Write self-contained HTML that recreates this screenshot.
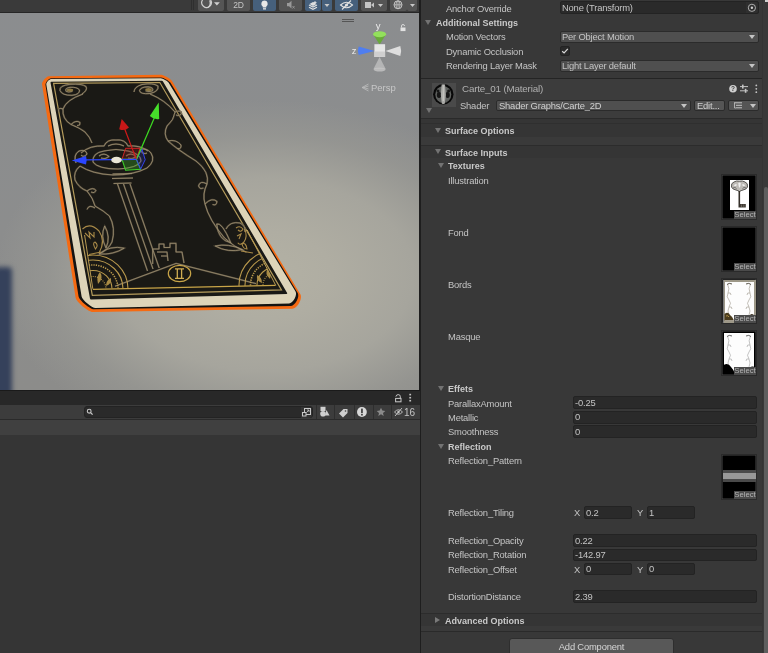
<!DOCTYPE html>
<html><head><meta charset="utf-8">
<style>
html,body{margin:0;padding:0;width:768px;height:653px;overflow:hidden;background:#383838;}
*{box-sizing:border-box;}
.a{position:absolute;}
svg.a{will-change:transform;}
.t{will-change:transform;position:absolute;font-family:"Liberation Sans",sans-serif;font-size:9.4px;letter-spacing:-0.18px;line-height:12px;color:#c4c4c4;white-space:nowrap;}
.b{font-weight:bold;color:#c9c9c9;font-size:9px;letter-spacing:0;}
.fld{position:absolute;background:#2a2a2a;border:1px solid #232323;border-radius:2px;}
.dd{position:absolute;background:#4f4f4f;border:1px solid #2b2b2b;border-radius:2px;}
.tri{position:absolute;width:0;height:0;border-left:3.3px solid transparent;border-right:3.3px solid transparent;border-top:5.4px solid #737373;}
.trir{position:absolute;width:0;height:0;border-top:3px solid transparent;border-bottom:3px solid transparent;border-left:5px solid #7a7a7a;}
.ddarrow{position:absolute;width:0;height:0;border-left:3px solid transparent;border-right:3px solid transparent;border-top:4px solid #c4c4c4;}
.tb{position:absolute;top:0;height:10.7px;background:#555555;border-radius:0 0 2px 2px;}
.tbon{background:#46607c;}
.slot{position:absolute;width:36px;height:46px;background:#000;border:1px solid #2a2a2a;box-shadow:0 0 0 0.5px #474747 inset;}
.sel{will-change:transform;position:absolute;width:22px;height:8px;background:#4b4b4b;font-family:"Liberation Sans",sans-serif;font-size:7.7px;line-height:8.8px;color:#b4b4b4;text-align:center;overflow:hidden;}
</style></head>
<body>
<!-- ================= SCENE VIEW ================= -->
<div class="a" style="left:0;top:0;width:419px;height:390px;overflow:hidden;background:radial-gradient(ellipse 270px 175px at 265px 275px,#b3b1a4 0%,#afada2 25%,#a6a59d 55%,rgba(152,152,147,0.7) 80%,rgba(140,141,140,0) 100%),linear-gradient(180deg,#8b8d8f 0%,#8c8d8d 60%,#8c8c8a 100%);">
  <!-- CARD -->
<svg class="a" style="left:0;top:0;" width="420" height="390" viewBox="0 0 420 390">
 <defs>
  <filter id="bl" x="-5%" y="-5%" width="110%" height="110%" color-interpolation-filters="sRGB"><feGaussianBlur stdDeviation="0.3"/></filter>
  <clipPath id="fanclip"><path d="M79.1 200 L231.7 200 L275.8 285.5 L92.8 288.8 Z"/></clipPath>
 </defs>
 <g filter="url(#bl)">
 <path d="M75.59 297.52 L42.02 84.24 C41.65 81.87 46.38 76.27 48.78 76.24 L161.22 74.86 C163.32 74.84 170.74 78.98 171.83 80.78 L300.32 294.35 C302.88 298.59 297.28 308.68 292.33 308.76 L92.92 312.08 C88.42 312.16 76.29 301.96 75.59 297.52 Z" fill="#f56a12"/>
 <path d="M78.52 296.15 L45.43 84.84 C45.13 82.92 48.98 78.39 50.93 78.37 L161.24 77.51 C163.04 77.50 169.41 81.06 170.34 82.60 L297.73 292.91 C300.06 296.76 295.00 305.92 290.50 305.99 L94.11 309.26 C90.06 309.33 79.15 300.15 78.52 296.15 Z" fill="#141311"/>
 <path d="M81.60 296.38 L46.32 84.42 C46.05 82.79 49.27 78.97 50.92 78.96 L160.92 78.23 C162.42 78.22 167.74 81.19 168.51 82.47 L295.54 291.57 C297.64 295.03 293.10 303.33 289.05 303.42 L95.57 307.94 C91.97 308.02 82.19 299.93 81.60 296.38 Z" fill="#ddd4b9"/>
 <path d="M89.99 298.58 L50.53 82.66 C50.44 82.17 50.85 81.67 51.35 81.67 L161.62 80.81 C162.12 80.81 162.87 81.23 163.13 81.66 L287.15 293.04 C287.41 293.48 287.16 293.92 286.66 293.94 L91.17 299.54 C90.67 299.55 90.08 299.08 89.99 298.58 Z" fill="#1a1915"/>
 <path d="M92.34 295.30 L53.61 83.35 L159.81 82.52 L281.47 289.88 Z" fill="none" stroke="#b59c5c" stroke-width="1.2"/>
 <path d="M92.8 289.4 L275.5 285.3" stroke="#c9a548" stroke-width="1.3" fill="none"/>
 <!-- ornaments grey-gold -->
 <g id="ornp" fill="none">
  <!-- TL spiral -->
  <path d="M82 94 Q88 90 86 86.5 Q82 83.5 70 84.3 Q59 85.5 60 90.5 Q62 95.5 72 95.3 Q80 94.5 79.5 90 Q77 86.8 70 87.3 Q64.5 88.3 66 91.2 Q68 92.8 72.5 91.2"/>
  <!-- TR spiral -->
  <path d="M134 92 Q134 87 142 84.5 Q153 82.5 158 86 Q159 91.5 150 93.5 Q140 94.5 139.5 90.5 Q141 86.8 148 86.8 Q154 87.5 152.5 90.8 Q149 92.5 145.5 90.8"/>
  <!-- left vine -->
  <path d="M83 94 Q66 100 63 109 Q62 119 71 124.5 Q80 128 85 132 Q90 137 92 143"/>
  <path d="M71 124.5 Q76 119.5 80 122.5 Q80.5 126 77 125.5"/>
  <path d="M63 109 Q58 107 58.5 111.5"/>
  <!-- right vine -->
  <path d="M150 94 Q165 100 175 112 Q174 120 167 126 Q163 134 168 141 Q178 150 196 161 Q210 172 207 184 Q202 194 205 204 Q209 220 224.5 238 Q234 247 246.4 252.2"/>
  <path d="M175 112 Q181 109.5 181.5 113.5 Q179.5 117 176 115"/>
  <path d="M168 141 Q176 139 181 145 Q181.5 149.5 177.5 148.5"/>
  <path d="M207 184 Q200 180 198.5 186 Q200 190 203.5 188"/>
  <path d="M205 204 Q212 197 217 201.5 Q216.5 206 212.5 204.5"/>
  <!-- lower left vine -->
  <path d="M80 166 Q73 172 75 180 Q79 188 87 191 Q93 198 95 206 Q104 211 109.4 216 Q116 228 112 242 Q108 250 99 254"/>
  <path d="M87 191 Q93 186.5 96 190.5 Q94.5 194 91 192"/>
  <path d="M95 208 Q89 204 87 209.5"/>
  <!-- key head -->
  <path d="M76 163 Q73 155 79 151 Q86 149 87 154 Q84 158 81 155"/>
  <path d="M80 166 Q92 174 113 175 Q134 175 147 168 Q156 161 151 153 Q146 147 140 150 Q143 155 147 153"/>
  <path d="M81 153 Q90 145 104 146 Q107 139 116 140 Q125 139 128 146 Q140 145 148 151"/>
  <path d="M93 162 Q92 153 104 151 Q116 148 128 151 Q141 154 141 161 Q138 168 118 169 Q98 169 93 162Z"/>
  <path d="M108 146 Q116 142 124 146 M99 156 Q104 152 109 156.5 Q105 160 101 158 M126 156 Q131 152 136 156.5 Q132 160 128 158"/>
  <!-- key collar & shaft -->
  <path d="M112.5 174 L132 173.5 M112 178.5 L133 178 M113.5 183.5 L131.5 183"/>
  <path d="M117.5 184 L147.5 271 M130 184 L159.2 268 M123.5 184 L153 269"/>
  <!-- key bit castle -->
  <path d="M152.7 264 L152.7 249 L159 249 L159 244 L164 244 L164 247.5 L170 247.5 L170 243.3 L176 243.3 L176 252 L182 252 L184 263"/>
  <path d="M157 252 L167 252 L168 261 M161 256 L167 256"/>
  <!-- leaves left -->
  <path d="M104.7 226 Q100 236 106 248 Q111 237 104.7 226Z"/>
  <path d="M99 254 Q110 245 124.2 248.2 Q113 255 99 254Z"/>
  <!-- leaves right -->
  <path d="M216.7 224 Q222 222 230.8 242.8 Q218 240 216.7 224Z"/>
  <path d="M215.2 246 Q228 243 242.5 249.5 Q228 253 215.2 246Z"/>
  <path d="M226 229 Q230 221 240 223 Q246 226 245 232"/>
  <!-- roof -->
  <path d="M115 286.2 L176.1 263.4 L256 283.6"/>
 </g>
 <use href="#ornp" stroke="#4f4737" stroke-width="1.7"/>
 <use href="#ornp" stroke="#a39475" stroke-width="0.75"/>
 <ellipse cx="70" cy="90" rx="3.2" ry="1.5" fill="#8a7640"/>
 <ellipse cx="148.5" cy="89.5" rx="3.2" ry="1.5" fill="#8a7640"/>
 <g fill="none" stroke="#c29f4a" stroke-width="1.1">
  <!-- curled gold leaves -->
  <g stroke="#a98a48" stroke-width="1.1" fill="none">
   <path d="M82.5 229 Q90 222 99 231 Q106 241 99 253"/>
   <path d="M85 233 L90 238 L89 232 L94 237 L94 232"/>
   <path d="M95.5 249 Q92 243 95 242 Q99 245 95.5 249Z"/>
   <path d="M89 254.5 L101 252"/>
   <path d="M244.5 229 Q248 236 244 242 Q240 246 237.8 242.8"/>
   <path d="M236 228 Q240 225 243 229 Q241 233 238 230 M237 236 L241 234 L239 239"/>
   <path d="M242 244 Q246 242 247 249 Q243 249 242 244Z"/>
   <path d="M241 251 L253 253"/>
  </g>
  <!-- fans -->
  <g clip-path="url(#fanclip)">
   <g stroke="#b8984c">
    <ellipse cx="93" cy="289" rx="35" ry="34"/>
    <ellipse cx="93" cy="289" rx="30" ry="29"/>
    <ellipse cx="93" cy="289" rx="25" ry="24" stroke-dasharray="1.3 1.1" stroke-width="1.6"/>
    <ellipse cx="93" cy="289" rx="19" ry="18.5"/>
    <ellipse cx="93" cy="289" rx="13" ry="12.5" stroke-dasharray="1 1.2"/>
    <ellipse cx="276" cy="285" rx="37" ry="35"/>
    <ellipse cx="276" cy="285" rx="31" ry="29.5"/>
    <ellipse cx="276" cy="285" rx="25.5" ry="24" stroke-dasharray="1.3 1.1" stroke-width="1.6"/>
    <ellipse cx="276" cy="285" rx="19" ry="18"/>
    <ellipse cx="276" cy="285" rx="13" ry="12.5" stroke-dasharray="1 1.2"/>
   </g>
   <path d="M98 284 Q96 276 100 272 Q104 278 98 284Z M106 286 Q106 280 111 278 Q112 284 106 286Z M270 279 Q272 272 268 268 Q264 274 270 279Z M262 283 Q262 277 257 275 Q256 281 262 283Z" fill="#a88a45" stroke="none"/>
  </g>
  <path d="M84.6 235 L92.8 288.8 M247.2 230 L275.8 285.5" stroke="#b89a52" stroke-width="1"/>
  <ellipse cx="179.5" cy="273.5" rx="11.2" ry="8.2" stroke="#c9a548" stroke-width="1.2"/>
  <path d="M177.3 268.8 V278.3 M181.6 268.8 V278.3 M175 268.8 H184 M175 278.3 H184" stroke="#d0ad52" stroke-width="1.3"/>
 </g>
 </g>
 <!-- transform gizmo -->
 <g>
  <path d="M122 159.4 L125.6 148.3 L140 148.3 L136.4 159.4Z" fill="rgba(150,30,30,0.28)" stroke="#d02424" stroke-width="1"/>
  <path d="M122 159.4 L136.4 159.4 L140.6 169.2 L125.6 170.2Z" fill="rgba(60,170,40,0.35)" stroke="#3fd02a" stroke-width="1.1"/>
  <path d="M136.4 159.4 L141.9 149 L145.2 159.7 L140.6 169.2Z" fill="rgba(40,50,200,0.22)" stroke="#3344ee" stroke-width="1"/>
  <path d="M136.4 159.4 L154.5 117.5" stroke="#3ddd22" stroke-width="1.2"/>
  <path d="M158.75 102.5 L149.8 116 Q154 120 159.2 119 Z" fill="#46e02a"/>
  <path d="M136.4 159.4 L124.5 128.5" stroke="#d31a1a" stroke-width="1.2"/>
  <path d="M121.7 118.9 L119.2 129.2 Q124.5 131.5 129 127.5 Z" fill="#c81818"/>
  <path d="M136.4 159.4 L85.8 159.9" stroke="#2a44ff" stroke-width="1.4"/>
  <path d="M71.7 160.6 L86 156 Q87.5 160.3 86 164.5 Z" fill="#2b46ff"/>
  <ellipse cx="116.5" cy="160" rx="5.3" ry="3.2" fill="#ebe6d6"/>
 </g>
</svg>

  <!-- blue object at left -->
  <div class="a" style="left:-6px;top:267px;width:17.5px;height:130px;background:#35415b;filter:blur(2.4px);border-radius:4px;"></div>
</div>
<!-- top toolbar -->
<div class="a" style="left:0;top:0;width:420px;height:12.5px;background:#3a3a3a;border-bottom:1.5px solid #262626;"></div>

<!-- toolbar buttons -->
<div class="a" style="left:191px;top:0;width:1px;height:10px;background:#2f2f2f;"></div>
<div class="a" style="left:193px;top:0;width:1px;height:10px;background:#2f2f2f;"></div>
<div class="tb" style="left:198px;width:26px;"></div>
<svg class="a" style="left:198px;top:0px;" width="26" height="11" viewBox="0 0 26 11"><path d="M4.5 0 A4.8 4.8 0 1 0 12.6 0" fill="none" stroke="#d0d0d0" stroke-width="1.2"/><path d="M11.2 0.5 Q12.8 5.5 8.5 8.2 Q12 7.8 13 4 Q13.2 1.5 12.4 0Z" fill="#d0d0d0"/><path d="M16 2.3 L21.8 2.3 L18.9 5.5 Z" fill="#d0d0d0"/></svg>
<div class="tb" style="left:227px;width:23px;"></div>
<div class="t" style="left:227px;top:-1px;width:23px;text-align:center;color:#c4c4c4;font-size:8.5px;">2D</div>
<div class="tb tbon" style="left:253px;width:23px;"></div>
<svg class="a" style="left:253px;top:0;" width="23" height="11" viewBox="0 0 23 11"><path d="M11.5 0.5 A3.3 3.3 0 0 1 13.3 6.5 V7.5 H9.7 V6.5 A3.3 3.3 0 0 1 11.5 0.5Z" fill="#e8e8e8"/><rect x="10" y="8.2" width="3" height="1.3" fill="#e8e8e8"/></svg>
<div class="tb" style="left:279px;width:23px;"></div>
<svg class="a" style="left:279px;top:0;" width="23" height="11" viewBox="0 0 23 11"><path d="M8 3 H10 L12.5 0.8 V8.5 L10 6.3 H8 Z" fill="#9a9a9a"/><path d="M13.5 6 L15.5 8.5 M15.5 6 L13.5 8.5" stroke="#9a9a9a" stroke-width="0.8"/></svg>
<div class="tb tbon" style="left:305px;width:16px;"></div>
<div class="tb tbon" style="left:322px;width:10px;"></div>
<svg class="a" style="left:305px;top:0;" width="27" height="11" viewBox="0 0 27 11"><path d="M4 5 L8 7 L12 5 M4 7.3 L8 9.3 L12 7.3" stroke="#e0e0e0" stroke-width="1.2" fill="none"/><path d="M4.5 4 L8 2 L11.5 4 L8 6Z" fill="#e0e0e0"/><path d="M10 1 V4 M8.5 2.5 H11.5" stroke="#e0e0e0" stroke-width="0.9"/><path d="M19.5 4 L24.5 4 L22 7 Z" fill="#c8c8c8"/></svg>
<div class="tb tbon" style="left:335px;width:23px;"></div>
<svg class="a" style="left:335px;top:0;" width="23" height="11" viewBox="0 0 23 11"><path d="M5.5 5 Q11.5 -0.5 17.5 5 Q11.5 10.5 5.5 5Z" fill="none" stroke="#e0e0e0" stroke-width="1.1"/><circle cx="11.5" cy="5" r="1.6" fill="#e0e0e0"/><path d="M7 9.5 L16 0.5" stroke="#e0e0e0" stroke-width="1.1"/></svg>
<div class="tb" style="left:361px;width:26px;"></div>
<svg class="a" style="left:361px;top:0;" width="26" height="11" viewBox="0 0 26 11"><rect x="4" y="2" width="6" height="6" fill="#c4c4c4"/><path d="M10 5 L13 2.5 V7.5Z" fill="#c4c4c4"/><path d="M17 4 L22 4 L19.5 7 Z" fill="#c8c8c8"/></svg>
<div class="tb" style="left:389.5px;width:17px;"></div>
<div class="tb" style="left:407px;width:10px;"></div>
<svg class="a" style="left:389.5px;top:0;" width="28" height="11" viewBox="0 0 28 11"><circle cx="8" cy="4.8" r="4" fill="none" stroke="#c8c8c8" stroke-width="1"/><path d="M4 4.8 H12 M8 0.8 V8.8" stroke="#c8c8c8" stroke-width="0.8"/><ellipse cx="8" cy="4.8" rx="2" ry="4" fill="none" stroke="#c8c8c8" stroke-width="0.8"/><path d="M20 4 L25 4 L22.5 7 Z" fill="#c8c8c8"/></svg>

<!-- scene gizmo top-right -->
<div class="a" style="left:342px;top:19px;width:12px;height:1px;background:#555;"></div>
<div class="a" style="left:342px;top:21px;width:12px;height:1px;background:#555;"></div>
<svg class="a" style="left:340px;top:15px;" width="80" height="80" viewBox="340 15 80 80">
 <text x="378.2" y="28.5" font-family="Liberation Sans" font-size="9.5" fill="#ececec" text-anchor="middle">y</text>
 <path d="M373.2 34.5 L379.6 44.5 L386 34.5 Z" fill="#68a83a"/>
 <ellipse cx="379.6" cy="34.2" rx="6.5" ry="3" fill="#93e05c"/>
 <path d="M374 57 L379.6 46 L385.2 57 Z" fill="#c9c9c9" opacity="0.6"/>
 <path d="M373.5 69 L379.6 57 L385.7 69 Z" fill="#c6c6c6" opacity="0.7"/>
 <ellipse cx="379.6" cy="69.5" rx="6" ry="2" fill="#c6c6c6" opacity="0.8"/>
 <path d="M358.7 46.5 L374.5 51 L358.7 55 Q357 51 358.7 46.5Z" fill="#4f7ef0"/>
 <path d="M400.3 46 L385.5 51 L400.3 56 Q402 51 400.3 46Z" fill="#dedede"/>
 <rect x="374.4" y="44.2" width="10.7" height="12.7" fill="#e6e6e6"/>
 <rect x="374.4" y="51.5" width="10.7" height="5.4" fill="#cfcfcf"/>
 <text x="354.1" y="54.4" font-family="Liberation Sans" font-size="9.5" fill="#ececec" text-anchor="middle">z</text>
 <rect x="400.5" y="27.5" width="5" height="3.6" fill="#e2e2e2"/>
 <path d="M401.5 27.5 V26 A1.5 1.5 0 0 1 404.5 26" fill="none" stroke="#e2e2e2" stroke-width="0.9"/>
 <path d="M368.5 84 L362 87.5 L368.5 91 M368.5 86 L363.5 87.5 L368.5 89" fill="none" stroke="#d0d0d0" stroke-width="0.7" opacity="0.85"/>
 
 <text x="371" y="91" font-family="Liberation Sans" font-size="9.5" fill="#d2d2d2" opacity="0.85">Persp</text>
</svg>

<!-- splitter -->
<div class="a" style="left:419px;top:0;width:2px;height:653px;background:#1e1e1e;"></div>

<!-- ================= BOTTOM PANEL ================= -->
<div class="a" style="left:0;top:389.6px;width:420px;height:1.4px;background:#1a1a1a;"></div>
<div class="a" style="left:0;top:391px;width:420px;height:14px;background:#282828;"></div>
<div class="a" style="left:0;top:405px;width:420px;height:14px;background:#3c3c3c;"></div>
<div class="a" style="left:0;top:419px;width:420px;height:1px;background:#2a2a2a;"></div>
<div class="a" style="left:0;top:420px;width:420px;height:15px;background:#404040;"></div>
<div class="a" style="left:0;top:435px;width:420px;height:218px;background:#353535;"></div>
<!-- bottom panel icons -->
<svg class="a" style="left:393px;top:392px;" width="24" height="12" viewBox="0 0 24 12"><rect x="2.6" y="6.4" width="5.4" height="3.4" fill="none" stroke="#c8c8c8" stroke-width="1"/><path d="M2.9 4.6 Q3.2 2.6 5.2 2.6 Q7.2 2.6 7.3 4.4 V6.4" fill="none" stroke="#c8c8c8" stroke-width="1"/><rect x="16.3" y="1.8" width="1.8" height="1.6" fill="#c0c0c0"/><rect x="16.3" y="4.9" width="1.8" height="1.6" fill="#c0c0c0"/><rect x="16.3" y="7.9" width="1.8" height="1.6" fill="#c0c0c0"/></svg>
<div class="a" style="left:83.5px;top:406px;width:229px;height:12px;background:#2a2a2a;border:1px solid #232323;border-radius:3px;"></div>
<svg class="a" style="left:86px;top:408px;" width="8" height="8" viewBox="0 0 8 8"><circle cx="3.2" cy="3.2" r="1.9" fill="none" stroke="#c8c8c8" stroke-width="1.1"/><path d="M4.6 4.6 L6.6 6.6" stroke="#c8c8c8" stroke-width="1.3"/></svg>
<div class="a" style="left:300.5px;top:406.5px;width:11.5px;height:11px;background:#333;border-radius:0 3px 3px 0;"></div>
<svg class="a" style="left:301px;top:406.5px;" width="11" height="11" viewBox="0 0 11 11"><rect x="3.5" y="1.5" width="6" height="6" fill="none" stroke="#c8c8c8" stroke-width="1"/><rect x="1.5" y="5.5" width="3.5" height="3.5" fill="#333" stroke="#c8c8c8" stroke-width="1"/><path d="M5.5 5.5 L8 3 M6 3 H8 V5" stroke="#c8c8c8" stroke-width="0.8" fill="none"/></svg>
<div class="a" style="left:315.5px;top:405px;width:1px;height:14px;background:#2e2e2e;"></div>
<div class="a" style="left:334.3px;top:405px;width:1px;height:14px;background:#2e2e2e;"></div>
<div class="a" style="left:353.5px;top:405px;width:1px;height:14px;background:#2e2e2e;"></div>
<div class="a" style="left:372.6px;top:405px;width:1px;height:14px;background:#2e2e2e;"></div>
<div class="a" style="left:390.7px;top:405px;width:1px;height:14px;background:#2e2e2e;"></div>
<svg class="a" style="left:316px;top:405px;" width="104" height="14" viewBox="316 405 104 14">
 <rect x="320.5" y="406.8" width="5" height="4.2" fill="#cfcfcf"/>
 <circle cx="323" cy="413.7" r="2.8" fill="#cfcfcf"/>
 <path d="M326.5 410 L329.5 415.5 L324.8 415.5Z" fill="#cfcfcf"/>
 <path d="M339 413.5 L343.5 409 H347.5 V413 L343 417.5 Z" fill="#cfcfcf"/>
 <circle cx="345.5" cy="411" r="0.8" fill="#3c3c3c"/>
 <circle cx="361.9" cy="412" r="4.9" fill="#d8d8d8"/>
 <rect x="361.1" y="408.6" width="1.7" height="4.6" fill="#3c3c3c"/><rect x="361.1" y="414" width="1.7" height="1.5" fill="#3c3c3c"/>
 <path d="M381 407.8 L382.3 410.6 L385.3 410.9 L383 412.9 L383.7 415.9 L381 414.3 L378.3 415.9 L379 412.9 L376.7 410.9 L379.7 410.6Z" fill="#8a8a8a"/>
 <path d="M394.5 412 Q398.5 407.5 402.5 412 Q398.5 416.5 394.5 412Z" fill="none" stroke="#c8c8c8" stroke-width="0.9"/>
 <circle cx="398.5" cy="412" r="1.2" fill="#c8c8c8"/>
 <path d="M395 416 L402 408" stroke="#c8c8c8" stroke-width="0.9"/>
 <text x="404" y="416" font-family="Liberation Sans" font-size="10" fill="#c4c4c4">16</text>
</svg>

<!-- ================= INSPECTOR ================= -->
<div class="a" style="left:421px;top:0;width:347px;height:653px;background:#383838;"></div>
<!-- rows top -->
<div class="fld" style="left:560px;top:1px;width:199px;height:13px;"></div>
<div class="t" style="left:562px;top:2px;">None (Transform)</div>
<div class="a" style="left:745.5px;top:2px;width:12.5px;height:11px;background:#2f2f2f;border-radius:0 2px 2px 0;"></div><svg class="a" style="left:747px;top:3px;" width="10" height="10" viewBox="0 0 10 10"><circle cx="4.9" cy="4.8" r="3.6" fill="none" stroke="#bcbcbc" stroke-width="0.9"/><circle cx="4.9" cy="4.8" r="1.2" fill="#cfcfcf"/></svg>
<div class="t" style="left:446px;top:2.6px;">Anchor Override</div>
<div class="tri" style="left:425px;top:20px;"></div>
<div class="t b" style="left:435.6px;top:16.7px;">Additional Settings</div>
<div class="t" style="left:446px;top:31.3px;">Motion Vectors</div>
<div class="dd" style="left:560px;top:31px;width:199px;height:12px;"></div>
<div class="t" style="left:562.3px;top:31.3px;">Per Object Motion</div>
<div class="ddarrow" style="left:749px;top:35px;"></div>
<div class="t" style="left:446px;top:45.6px;">Dynamic Occlusion</div>
<div class="fld" style="left:560px;top:46px;width:10px;height:10px;"></div>
<svg class="a" style="left:561px;top:47px;" width="8" height="8" viewBox="0 0 8 8"><path d="M1.2 4.2 L3.1 6 L6.8 1.8" fill="none" stroke="#d8d8d8" stroke-width="1.2"/></svg>
<div class="t" style="left:446px;top:59.9px;">Rendering Layer Mask</div>
<div class="dd" style="left:560px;top:60px;width:199px;height:12px;"></div>
<div class="t" style="left:562.3px;top:60.2px;">Light Layer default</div>
<div class="ddarrow" style="left:749px;top:64px;"></div>
<div class="a" style="left:421px;top:78px;width:347px;height:1px;background:#242424;"></div>

<!-- material header -->
<div class="a" style="left:421px;top:79px;width:341px;height:39px;background:#3c3c3c;"></div>
<div class="a" style="left:432px;top:83px;width:24px;height:24px;background:#4a4a4a;"></div>
<svg class="a" style="left:432px;top:83px;" width="24" height="24" viewBox="0 0 24 24">
 <defs><radialGradient id="mg" cx="0.5" cy="0.45" r="0.55"><stop offset="0" stop-color="#a8a8a8"/><stop offset="0.6" stop-color="#777"/><stop offset="1" stop-color="#333"/></radialGradient><filter id="mb" color-interpolation-filters="sRGB"><feGaussianBlur stdDeviation="0.45"/></filter></defs>
 <g filter="url(#mb)">
 <circle cx="11.3" cy="11.3" r="10.2" fill="#080808"/>
 <ellipse cx="11.3" cy="11.5" rx="8" ry="8.6" fill="#5f615f"/>
 <ellipse cx="7" cy="12" rx="2.2" ry="3" fill="#151515"/>
 <ellipse cx="15.6" cy="12" rx="2.2" ry="3" fill="#151515"/>
 <ellipse cx="6" cy="8" rx="1.5" ry="1.5" fill="#151515"/>
 <ellipse cx="16.6" cy="8" rx="1.5" ry="1.5" fill="#151515"/>
 <path d="M9.6 1.5 Q11.3 0.8 13 1.5 L13.8 12 L12.8 20.5 Q11.3 21.5 9.8 20.5 L8.8 12 Z" fill="#a9a9a6"/>
 <path d="M10.9 2 L11.7 2 L12 18 L10.6 18Z" fill="#c4c4c0"/>
 </g>
</svg>
<div class="tri" style="left:425.5px;top:108px;"></div>
<div class="t" style="left:461.7px;top:83px;font-size:9.8px;color:#b0b0b0;">Carte_01 (Material)</div>
<div class="t" style="left:460px;top:100.3px;">Shader</div>
<div class="dd" style="left:496px;top:100px;width:195px;height:11px;"></div>
<div class="t" style="left:499px;top:99.8px;color:#d0d0d0;">Shader Graphs/Carte_2D</div>
<div class="ddarrow" style="left:681px;top:104px;"></div>
<div class="dd" style="left:694px;top:100px;width:31px;height:11px;background:#555;"></div>
<div class="t" style="left:697px;top:99.8px;color:#d0d0d0;">Edit...</div>
<div class="dd" style="left:728px;top:100px;width:31px;height:11px;background:#555;"></div>
<svg class="a" style="left:733px;top:102px;" width="10" height="7" viewBox="0 0 10 7"><path d="M1 0.8 H9 M3 3.3 H9 M3 5.8 H9" stroke="#c4c4c4" stroke-width="1"/><path d="M1.5 1 V6 H3" stroke="#c4c4c4" fill="none" stroke-width="0.8"/></svg>
<div class="ddarrow" style="left:750px;top:104px;"></div>
<svg class="a" style="left:728px;top:83.5px;" width="32" height="10" viewBox="0 0 32 10">
 <circle cx="5" cy="4.8" r="3.8" fill="#cfcfcf"/><text x="5" y="7.3" font-family="Liberation Sans" font-weight="bold" font-size="6.5" fill="#3c3c3c" text-anchor="middle">?</text>
 <path d="M12 2.6 H20 M12 6.8 H20" stroke="#c4c4c4" stroke-width="1"/><rect x="14" y="0.6" width="1.6" height="4" fill="#c4c4c4"/><rect x="16.8" y="4.8" width="1.6" height="4" fill="#c4c4c4"/>
 <circle cx="28.3" cy="1.4" r="0.9" fill="#c4c4c4"/><circle cx="28.3" cy="4.8" r="0.9" fill="#c4c4c4"/><circle cx="28.3" cy="8.2" r="0.9" fill="#c4c4c4"/>
</svg>
<div class="a" style="left:421px;top:118px;width:341px;height:1px;background:#2a2a2a;"></div>
<div class="a" style="left:421px;top:119px;width:341px;height:4px;background:#353535;"></div>
<div class="a" style="left:421px;top:123px;width:341px;height:1px;background:#2f2f2f;"></div>

<!-- surface options -->
<div class="a" style="left:421px;top:124px;width:341px;height:13px;background:#353535;"></div>
<div class="a" style="left:421px;top:137px;width:341px;height:8px;background:#3a3a3a;"></div>
<div class="a" style="left:421px;top:145px;width:341px;height:1px;background:#2c2c2c;"></div>
<div class="tri" style="left:434.5px;top:127.5px;"></div>
<div class="t b" style="left:444.7px;top:125px;">Surface Options</div>
<div class="a" style="left:421px;top:146px;width:341px;height:12px;background:#353535;"></div>
<div class="tri" style="left:434.5px;top:149px;"></div>
<div class="t b" style="left:444.7px;top:146.6px;">Surface Inputs</div>
<div class="tri" style="left:437.5px;top:163px;"></div>
<div class="t b" style="left:448px;top:160.3px;">Textures</div>

<!-- textures -->
<div class="t" style="left:447.8px;top:174.6px;">Illustration</div>
<div class="t" style="left:447.8px;top:227px;">Fond</div>
<div class="t" style="left:447.8px;top:278.7px;">Bords</div>
<div class="t" style="left:447.8px;top:330.8px;">Masque</div>

<div class="slot" style="left:721px;top:174px;"></div>
<div class="a" style="left:729.5px;top:180px;width:19px;height:30px;background:#fff;"></div>
<svg class="a" style="left:729.5px;top:180px;" width="19" height="30" viewBox="0 0 19 30">
 <path d="M1.5 7 Q0.8 3 4 2 Q6.5 0.4 9.3 1.2 Q12.5 0.4 15 2 Q18.2 3 17.5 7 Q16.5 9.5 13 10 Q11 10.5 9.5 11.5 Q8 10.5 6 10 Q2.5 9.5 1.5 7Z" fill="#bdbab5" stroke="#4a4744" stroke-width="0.9"/>
 <path d="M4 5.5 Q5 3.5 7 4.5 Q6 7 4 5.5Z M15 5.5 Q14 3.5 12 4.5 Q13 7 15 5.5Z M8.3 3 Q9.5 2 10.7 3 Q10.7 6 9.5 8 Q8.3 6 8.3 3Z" fill="#f2f2f2"/>
 <path d="M3 8 Q5 6.5 6.5 8.5 M16 8 Q14 6.5 12.5 8.5" stroke="#555" stroke-width="0.7" fill="none"/>
 <path d="M9.3 11 V27.5" stroke="#35302a" stroke-width="1.6"/>
 <path d="M10 24 H15.8 V27.5 H10Z" fill="#3f3a33"/>
 <path d="M11.5 24.5 V27 M13.8 24.5 V27" stroke="#8a8478" stroke-width="0.6"/>
</svg>
<div class="sel" style="left:734.2px;top:210.8px;">Select</div>

<div class="slot" style="left:721px;top:226px;"></div>
<div class="sel" style="left:734.2px;top:262.8px;">Select</div>

<div class="slot" style="left:721px;top:278px;"></div>
<div class="a" style="left:722.5px;top:279.5px;width:33px;height:43px;background:#9d9888;"></div>
<div class="a" style="left:722.5px;top:279.5px;width:1.5px;height:43px;background:#7d7d7d;"></div>
<div class="a" style="left:724.5px;top:281.5px;width:29.5px;height:39px;background:#fdfdfd;"></div>
<svg class="a" style="left:724px;top:281px;" width="30" height="40" viewBox="0 0 30 40">
 <g stroke="#a9a49a" stroke-width="0.7" fill="none">
 <path d="M3.5 3 Q6 8 4 12 Q2 16 5 19 Q8 22 5 26 Q3 30 5 34"/>
 <path d="M26.5 3 Q24 8 26 12 Q28 16 25 19 Q22 22 25 26 Q27 30 25 34"/>
 <path d="M4 12 Q7 11 7 14 M5 26 Q8 25 8 28 M26 12 Q23 11 23 14 M25 26 Q22 25 22 28"/>
 </g>
 <path d="M3 3.5 Q5 1.5 8 3 M22 3 Q25 1.5 27 3.5" stroke="#5a554a" stroke-width="1" fill="none"/>
 <path d="M0.5 33 Q4 30 6 34 Q9 36 10 39.5 L0.5 39.5Z" fill="#4a3c1e"/>
 <path d="M2 35 Q4 34 5 36" stroke="#c9a650" stroke-width="0.8" fill="none"/>
 <path d="M29.5 33.5 Q26 32 25 36 Q26 38 29.5 37Z" fill="#3a3020"/>
</svg>
<div class="sel" style="left:734.2px;top:314.8px;">Select</div>

<div class="slot" style="left:721px;top:330px;"></div>
<div class="a" style="left:723.8px;top:333.2px;width:30.4px;height:40px;background:#fdfdfd;"></div>
<svg class="a" style="left:724px;top:333px;" width="30" height="41" viewBox="0 0 30 41">
 <g stroke="#aaa" stroke-width="0.7" fill="none">
 <path d="M3.5 3 Q6 8 4 12 Q2 16 5 19 Q8 22 5 26 Q3 30 5 34"/>
 <path d="M26.5 3 Q24 8 26 12 Q28 16 25 19 Q22 22 25 26 Q27 30 25 34"/>
 <path d="M4 12 Q7 11 7 14 M5 26 Q8 25 8 28 M26 12 Q23 11 23 14 M25 26 Q22 25 22 28"/>
 </g>
 <path d="M3 3.5 Q5 1.5 8 3 M22 3 Q25 1.5 27 3.5" stroke="#666" stroke-width="1" fill="none"/>
 <path d="M-0.5 32 Q4 29 7 34 Q10 37 11 41 L-0.5 41Z" fill="#000"/>
 <path d="M30.5 34 Q26 32.5 25 36.5 Q26 39 30.5 38Z" fill="#000"/>
</svg>
<div class="sel" style="left:734.2px;top:366.8px;">Select</div>

<!-- effets -->
<div class="tri" style="left:437.5px;top:386px;"></div>
<div class="t b" style="left:448px;top:383.1px;">Effets</div>
<div class="t" style="left:447.8px;top:397.5px;">ParallaxAmount</div>
<div class="fld" style="left:573px;top:396px;width:184px;height:12.5px;"></div>
<div class="t" style="left:575.4px;top:396.8px;">-0.25</div>
<div class="t" style="left:447.8px;top:411.8px;">Metallic</div>
<div class="fld" style="left:573px;top:411px;width:184px;height:12.5px;"></div>
<div class="t" style="left:575.4px;top:411.2px;">0</div>
<div class="t" style="left:447.8px;top:426.4px;">Smoothness</div>
<div class="fld" style="left:573px;top:425.3px;width:184px;height:12.5px;"></div>
<div class="t" style="left:575.4px;top:425.6px;">0</div>

<!-- reflection -->
<div class="tri" style="left:437.5px;top:444px;"></div>
<div class="t b" style="left:448px;top:440.9px;">Reflection</div>
<div class="t" style="left:447.8px;top:455.3px;">Reflection_Pattern</div>
<div class="slot" style="left:721px;top:454px;"></div>
<div class="a" style="left:722.5px;top:470.3px;width:33px;height:2.7px;background:#4a4a4a;"></div>
<div class="a" style="left:722.5px;top:473px;width:33px;height:6.3px;background:#989898;"></div>
<div class="a" style="left:722.5px;top:479.3px;width:33px;height:2.7px;background:#4a4a4a;"></div>
<div class="sel" style="left:734.2px;top:490.8px;">Select</div>

<div class="t" style="left:447.8px;top:507.4px;">Reflection_Tiling</div>
<div class="t" style="left:573.5px;top:507.2px;">X</div>
<div class="fld" style="left:583.8px;top:506.3px;width:48px;height:12.5px;"></div>
<div class="t" style="left:586px;top:507px;">0.2</div>
<div class="t" style="left:636.7px;top:507.2px;">Y</div>
<div class="fld" style="left:646.7px;top:506.3px;width:48px;height:12.5px;"></div>
<div class="t" style="left:649px;top:507px;">1</div>

<div class="t" style="left:447.8px;top:535px;">Reflection_Opacity</div>
<div class="fld" style="left:573px;top:534.2px;width:184px;height:12.5px;"></div>
<div class="t" style="left:575.4px;top:534.8px;">0.22</div>
<div class="t" style="left:447.8px;top:549.3px;">Reflection_Rotation</div>
<div class="fld" style="left:573px;top:548.5px;width:184px;height:12.5px;"></div>
<div class="t" style="left:575.4px;top:549.2px;">-142.97</div>
<div class="t" style="left:447.8px;top:563.6px;">Reflection_Offset</div>
<div class="t" style="left:573.5px;top:563.6px;">X</div>
<div class="fld" style="left:583.8px;top:562.7px;width:48px;height:12.5px;"></div>
<div class="t" style="left:586px;top:563.4px;">0</div>
<div class="t" style="left:636.7px;top:563.6px;">Y</div>
<div class="fld" style="left:646.7px;top:562.7px;width:48px;height:12.5px;"></div>
<div class="t" style="left:649px;top:563.4px;">0</div>

<div class="t" style="left:447.8px;top:591.1px;">DistortionDistance</div>
<div class="fld" style="left:573px;top:590.2px;width:184px;height:12.5px;"></div>
<div class="t" style="left:575.4px;top:590.8px;">2.39</div>

<!-- advanced -->
<div class="a" style="left:421px;top:613px;width:341px;height:1px;background:#2c2c2c;"></div>
<div class="a" style="left:421px;top:614px;width:341px;height:12px;background:#353535;"></div>
<div class="a" style="left:421px;top:626px;width:341px;height:5px;background:#3a3a3a;"></div>
<div class="a" style="left:421px;top:631px;width:341px;height:1px;background:#2a2a2a;"></div>
<div class="trir" style="left:435px;top:616.5px;"></div>
<div class="t b" style="left:445.2px;top:614.5px;">Advanced Options</div>

<div class="a" style="left:509px;top:638px;width:165px;height:20px;background:#585858;border:1px solid #2e2e2e;border-radius:3px;"></div>
<div class="t" style="left:509px;top:640.5px;width:165px;text-align:center;color:#d6d6d6;">Add Component</div>

<!-- scrollbar -->
<div class="a" style="left:762px;top:0;width:6px;height:653px;background:#393939;border-left:1px solid #343434;"></div>
<div class="a" style="left:763.5px;top:187px;width:4.5px;height:470px;background:#5e5e5e;border-radius:2.5px;"></div>
<div class="a" style="left:765px;top:0;width:3px;height:2px;background:#cfcfcf;"></div>

</body></html>
